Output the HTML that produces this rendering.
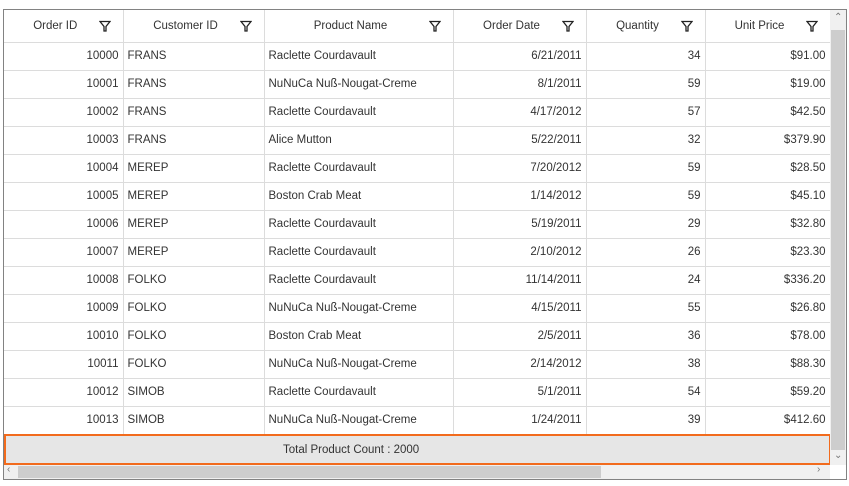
<!DOCTYPE html>
<html><head><style>
*{box-sizing:border-box;margin:0;padding:0}
body{width:849px;height:486px;background:#fff;font-family:"Segoe UI","Liberation Sans",sans-serif;font-size:11.5px;color:#333;position:relative;overflow:hidden}
.grid{position:absolute;left:3px;top:9px;width:844px;height:471px;border:1px solid #828282;background:#fff}
table{position:absolute;left:0;top:0;border-collapse:collapse;table-layout:fixed}
td,th{border-right:1px solid #dcdcdc;border-bottom:1px solid #dcdcdc;height:28px;padding:0 4px;white-space:nowrap;overflow:hidden;font-weight:normal}
th{height:32px;position:relative;text-align:center;color:#333;padding-right:20px}
th svg{position:absolute;right:12px;top:10px}
.r{text-align:right}
.vs{position:absolute;left:826px;top:0;width:16px;height:455px;background:#f0f0f0}
.vs .th{position:absolute;left:1px;top:20px;width:14px;height:420px;background:#cdcdcd}
.hs{position:absolute;left:0;top:455px;width:826px;height:14px;background:#f0f0f0}
.hs .th{position:absolute;left:14px;top:1px;width:583px;height:12px;background:#cdcdcd}
.foot{position:absolute;left:0;top:424px;width:827px;height:31px;background:#e6e6e6;border:2px solid #f26b1d}
.foot span{position:absolute;left:277px;top:8px;color:#333}
.arr{position:absolute;color:#777;font-size:10px}
</style></head><body>
<div class="grid">
<table>
<colgroup><col style="width:119px"><col style="width:141px"><col style="width:189px"><col style="width:133px"><col style="width:119px"><col style="width:125px"></colgroup>
<tr>
<th>Order ID<svg width="12" height="12" viewBox="0 0 12 12"><path d="M1 1.5H11L7 6.5V11H5V6.5Z" fill="none" stroke="#222" stroke-width="1.3"/></svg></th>
<th>Customer ID<svg width="12" height="12" viewBox="0 0 12 12"><path d="M1 1.5H11L7 6.5V11H5V6.5Z" fill="none" stroke="#222" stroke-width="1.3"/></svg></th>
<th>Product Name<svg width="12" height="12" viewBox="0 0 12 12"><path d="M1 1.5H11L7 6.5V11H5V6.5Z" fill="none" stroke="#222" stroke-width="1.3"/></svg></th>
<th>Order Date<svg width="12" height="12" viewBox="0 0 12 12"><path d="M1 1.5H11L7 6.5V11H5V6.5Z" fill="none" stroke="#222" stroke-width="1.3"/></svg></th>
<th>Quantity<svg width="12" height="12" viewBox="0 0 12 12"><path d="M1 1.5H11L7 6.5V11H5V6.5Z" fill="none" stroke="#222" stroke-width="1.3"/></svg></th>
<th>Unit Price<svg width="12" height="12" viewBox="0 0 12 12"><path d="M1 1.5H11L7 6.5V11H5V6.5Z" fill="none" stroke="#222" stroke-width="1.3"/></svg></th>
</tr>
<tr><td class="r">10000</td><td>FRANS</td><td>Raclette Courdavault</td><td class="r">6/21/2011</td><td class="r">34</td><td class="r">$91.00</td></tr>
<tr><td class="r">10001</td><td>FRANS</td><td>NuNuCa Nuß-Nougat-Creme</td><td class="r">8/1/2011</td><td class="r">59</td><td class="r">$19.00</td></tr>
<tr><td class="r">10002</td><td>FRANS</td><td>Raclette Courdavault</td><td class="r">4/17/2012</td><td class="r">57</td><td class="r">$42.50</td></tr>
<tr><td class="r">10003</td><td>FRANS</td><td>Alice Mutton</td><td class="r">5/22/2011</td><td class="r">32</td><td class="r">$379.90</td></tr>
<tr><td class="r">10004</td><td>MEREP</td><td>Raclette Courdavault</td><td class="r">7/20/2012</td><td class="r">59</td><td class="r">$28.50</td></tr>
<tr><td class="r">10005</td><td>MEREP</td><td>Boston Crab Meat</td><td class="r">1/14/2012</td><td class="r">59</td><td class="r">$45.10</td></tr>
<tr><td class="r">10006</td><td>MEREP</td><td>Raclette Courdavault</td><td class="r">5/19/2011</td><td class="r">29</td><td class="r">$32.80</td></tr>
<tr><td class="r">10007</td><td>MEREP</td><td>Raclette Courdavault</td><td class="r">2/10/2012</td><td class="r">26</td><td class="r">$23.30</td></tr>
<tr><td class="r">10008</td><td>FOLKO</td><td>Raclette Courdavault</td><td class="r">11/14/2011</td><td class="r">24</td><td class="r">$336.20</td></tr>
<tr><td class="r">10009</td><td>FOLKO</td><td>NuNuCa Nuß-Nougat-Creme</td><td class="r">4/15/2011</td><td class="r">55</td><td class="r">$26.80</td></tr>
<tr><td class="r">10010</td><td>FOLKO</td><td>Boston Crab Meat</td><td class="r">2/5/2011</td><td class="r">36</td><td class="r">$78.00</td></tr>
<tr><td class="r">10011</td><td>FOLKO</td><td>NuNuCa Nuß-Nougat-Creme</td><td class="r">2/14/2012</td><td class="r">38</td><td class="r">$88.30</td></tr>
<tr><td class="r">10012</td><td>SIMOB</td><td>Raclette Courdavault</td><td class="r">5/1/2011</td><td class="r">54</td><td class="r">$59.20</td></tr>
<tr><td class="r">10013</td><td>SIMOB</td><td>NuNuCa Nuß-Nougat-Creme</td><td class="r">1/24/2011</td><td class="r">39</td><td class="r">$412.60</td></tr>
</table>
<div class="foot"><span>Total Product Count : 2000</span></div>
<div class="vs"><div class="th"></div><span class="arr" style="left:4px;top:2px">&#8963;</span><span class="arr" style="left:4px;top:440px">&#8964;</span></div>
<div class="hs"><div class="th"></div><span class="arr" style="left:3px;top:-1px">&lsaquo;</span><span class="arr" style="left:813px;top:-1px">&rsaquo;</span></div>
</div>
</body></html>
